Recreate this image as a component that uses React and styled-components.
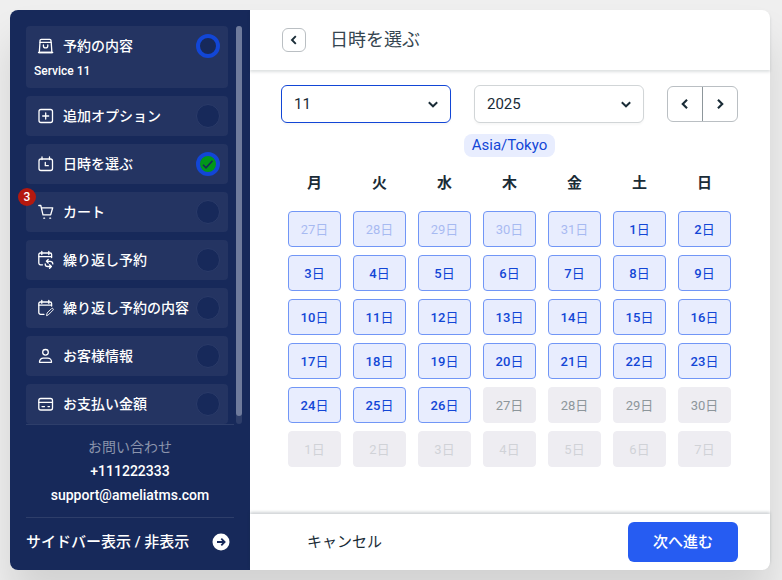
import React, { useState } from 'react';
import styled, { createGlobalStyle } from 'styled-components';

const GlobalStyle = createGlobalStyle`
  * {
    box-sizing: border-box;
  }
  body {
    margin: 0;
    background: #efefef;
    font-family: Roboto, 'Noto Sans CJK JP', sans-serif;
    color: #1a2c37;
  }
  button, select {
    font-family: inherit;
    color: inherit;
    cursor: pointer;
  }
`;

const Page = styled.div`
  min-height: 100vh;
  padding: 10px 12px 10px 10px;
  display: flex;
`;

const Card = styled.div`
  flex: 1;
  display: flex;
  border-radius: 8px;
  background: #fff;
  box-shadow: 0 30px 40px rgba(0, 0, 0, 0.12);
`;

const Sidebar = styled.aside`
  width: 240px;
  flex-shrink: 0;
  display: flex;
  flex-direction: column;
  padding: 16px 16px 0;
  border-radius: 8px 0 0 8px;
  background: #17295a;
  color: #fff;
`;

const StepArea = styled.div`
  flex: 1;
  display: flex;
  gap: 8px;
  margin-right: -8px;
`;

const StepList = styled.ul`
  flex: 1;
  min-width: 0;
  display: flex;
  flex-direction: column;
  gap: 8px;
  margin: 0;
  padding: 0;
  list-style: none;
`;

const Step = styled.li`
  position: relative;
  padding: 8px;
  border-radius: 4px;
  background: #243462;
`;

const StepHead = styled.div`
  display: flex;
  align-items: center;
  height: 24px;
  font-size: 14px;
  font-weight: 500;
  white-space: nowrap;

  svg {
    flex-shrink: 0;
    margin-right: 5px;
  }
`;

const StepLabel = styled.span`
  flex: 1;
  min-width: 0;
  line-height: 24px;
`;

const StepNote = styled.p`
  margin: 4px 0 0;
  font-size: 12px;
  font-weight: 500;
  line-height: 18px;
`;

const Marker = styled.span`
  width: 24px;
  height: 24px;
  flex-shrink: 0;
  display: flex;
  align-items: center;
  justify-content: center;
  border-radius: 50%;
  border: ${(props) => (props.$active ? '4px solid #1246d6' : '1px solid #2b3b69')};
  background: ${(props) => (props.$done ? '#019719' : '#17295a')};

  svg {
    margin: 0;
  }
`;

const Badge = styled.span`
  position: absolute;
  top: -4px;
  left: -8px;
  width: 18px;
  height: 18px;
  border-radius: 50%;
  background: #b4190f;
  font-size: 12px;
  font-weight: 500;
  line-height: 18px;
  text-align: center;
`;

const ScrollTrack = styled.div`
  width: 6px;
  padding-bottom: 8px;
  border-radius: 3px;
  background: #2e3e6a;
`;

const ScrollThumb = styled.div`
  height: 100%;
  border-radius: 3px;
  background: #6f7b9c;
`;

const Support = styled.div`
  display: flex;
  flex-direction: column;
  align-items: center;
  padding: 10px 0;
  border-top: 1px solid #2e3e6a;
  border-bottom: 1px solid #2e3e6a;
  font-size: 14px;
  font-weight: 500;
  line-height: 24px;
`;

const SupportTitle = styled.span`
  font-weight: 400;
  color: #8b94ac;
`;

const SupportLink = styled.a`
  color: #fff;
  text-decoration: none;
`;

const Collapse = styled.button`
  display: flex;
  align-items: center;
  justify-content: space-between;
  padding: 12px 4px 16px 0;
  border: none;
  background: none;
  color: #fff;
  font-size: 15px;
  font-weight: 500;
  line-height: 24px;
`;

const Main = styled.main`
  flex: 1;
  min-width: 0;
  display: flex;
  flex-direction: column;
`;

const Header = styled.header`
  display: flex;
  align-items: center;
  gap: 24px;
  height: 60px;
  padding: 0 32px;
  border-radius: 0 8px 0 0;
  box-shadow: 0 2px 3px rgba(26, 44, 55, 0.15);
`;

const BackButton = styled.button`
  width: 24px;
  height: 24px;
  display: flex;
  align-items: center;
  justify-content: center;
  padding: 0;
  border: 1px solid #babfc3;
  border-radius: 6px;
  background: #fff;
`;

const Title = styled.h1`
  margin: 0;
  font-size: 18px;
  font-weight: 400;
  line-height: 28px;
  color: #354550;
`;

const Content = styled.div`
  flex: 1;
  display: flex;
  flex-direction: column;
  padding: 15px 32px 0 31px;
`;

const Filters = styled.div`
  display: flex;
  align-items: center;
  gap: 23px;
`;

const SelectBox = styled.div`
  flex: 1;
  display: grid;
  align-items: center;

  & > * {
    grid-area: 1 / 1;
  }

  svg {
    justify-self: end;
    margin-right: 10px;
    pointer-events: none;
  }
`;

const Select = styled.select`
  width: 100%;
  height: 38px;
  padding: 0 36px 0 12px;
  appearance: none;
  border: 1px solid ${(props) => (props.$focused ? '#1246d6' : '#d1d5d7')};
  border-radius: 6px;
  background: #fff;
  box-shadow: 0 2px 2px rgba(14, 25, 32, 0.03);
  font-size: 15px;
`;

const Pager = styled.div`
  display: flex;
  height: 36px;
  border: 1px solid #babfc3;
  border-radius: 6px;
`;

const PagerButton = styled.button`
  width: 34px;
  display: flex;
  align-items: center;
  justify-content: center;
  padding: 0;
  border: none;
  background: none;

  & + & {
    width: 35px;
    border-left: 1px solid #8d969b;
  }
`;

const TimeZone = styled.span`
  align-self: center;
  margin-top: 11px;
  padding: 0 8px;
  border-radius: 8px;
  background: #e8edfe;
  color: #1246d6;
  font-size: 15px;
  line-height: 23px;
`;

const Calendar = styled.div`
  display: grid;
  grid-template-columns: repeat(7, 1fr);
  gap: 8px 12px;
  padding: 14px 7px 0;
`;

const Weekday = styled.span`
  margin-bottom: 8px;
  font-size: 15px;
  font-weight: 700;
  line-height: 24px;
  text-align: center;
`;

const Day = styled.button`
  height: 36px;
  padding: 0 0 2px;
  border: 1px solid ${(props) => (props.disabled ? '#eeedf2' : '#7196f6')};
  border-radius: 4px;
  background: ${(props) => (props.disabled ? '#eeedf2' : '#e8edfe')};
  font-size: 13px;
  font-weight: ${(props) => (props.disabled || props.$outside ? 400 : 500)};

  span {
    color: ${(props) => (props.disabled ? '#8d969b' : '#1246d6')};
    opacity: ${(props) => (props.$outside ? 0.3 : 1)};
  }

  small {
    font-size: 13px;
    font-weight: 400;
  }
`;

const Footer = styled.footer`
  display: flex;
  align-items: center;
  justify-content: space-between;
  height: 56px;
  padding: 0 32px;
  border-radius: 0 0 8px;
  box-shadow: 0 -2px 3px rgba(26, 44, 55, 0.2);
`;

const FooterButton = styled.button`
  height: 40px;
  padding: 0 25px 4px;
  border: none;
  border-radius: 6px;
  background: ${(props) => (props.$primary ? '#265cf2' : 'none')};
  color: ${(props) => (props.$primary ? '#fff' : '#1a2c37')};
  font-size: 15px;
  font-weight: ${(props) => (props.$primary ? 500 : 400)};
`;

const icons = {
  service: (
    <>
      <path d="M6 8.3V6.7a1.3 1.3 0 0 1 1.300-1.300h8.400a1.300 1.300 0 0 1 1.300 1.300v1.600" />
      <path d="M6 8.300h11.200l.7 10.200H5.300z" />
      <path d="M4.500 18.500h14.200M9.400 11v.7a2.200 2.200 0 0 0 4.400 0V11" />
    </>
  ),
  extras: (
    <>
      <rect x="5" y="5.5" width="13.500" height="13" rx="2" />
      <path d="M11.700 9v6M8.700 12h6" />
    </>
  ),
  dateTime: (
    <>
      <rect x="5" y="7" width="13.500" height="11.500" rx="2" />
      <path d="M8 5v2.500M15.500 5v2.500M11.300 10.400v3.300h3" />
    </>
  ),
  cart: (
    <>
      <path d="M4.800 5.500h2l2.200 9.300h7.700l2-7h-11" />
      <path d="M9.800 18.200h.8M15.800 18.200h.8" />
    </>
  ),
  recurring: (
    <>
      <path d="M8.500 16.800h-2A1.700 1.700 0 0 1 4.800 15V6.600A1.600 1.600 0 0 1 6.400 5H16a1.600 1.600 0 0 1 1.600 1.600V9.500" />
      <path d="M7.800 3.500v3M14.800 3.500v3M5 8.600h12.500" />
      <path d="M12.400 13.300h3.800a2.600 2.600 0 0 1 2.600 2.600M14.200 11.500l-1.800 1.800 1.800 1.700M17.400 18.500h-3.600a2.600 2.600 0 0 1-2.600-2.600M15.600 16.800l1.800 1.700-1.800 1.800" />
    </>
  ),
  summary: (
    <>
      <path d="M10 18.300H6.600A1.700 1.700 0 0 1 4.800 16.600V7.600A1.600 1.600 0 0 1 6.400 6H16a1.600 1.600 0 0 1 1.600 1.600V10" />
      <path d="M7.800 4.300v3M14.800 4.300v3M5 9.200h12.500" />
      <path d="M12.600 19.300l.5-2.300 4.400-4.400a1 1 0 0 1 1.500 1.500l-4.400 4.500z" strokeWidth="0.9" />
    </>
  ),
  customer: (
    <>
      <circle cx="11.5" cy="8.300" r="2.800" />
      <path d="M5.500 18.300v-.5a3.700 3.700 0 0 1 3.700-3.700h4.600a3.700 3.700 0 0 1 3.700 3.700v.5z" />
    </>
  ),
  payment: (
    <>
      <rect x="4.800" y="6.500" width="13.700" height="11.500" rx="2" />
      <path d="M5 10.300h13.500M8 14.600h2.500M14 14.600h1.500" />
    </>
  ),
};

function Icon({ name }) {
  return (
    <svg
      width="24"
      height="24"
      viewBox="0 0 24 24"
      fill="none"
      stroke="currentColor"
      strokeWidth="1.3"
      strokeLinecap="round"
      strokeLinejoin="round"
      aria-hidden="true"
    >
      {icons[name]}
    </svg>
  );
}

const chevrons = {
  left: 'M9.800 4.200L6 8l3.800 3.800',
  right: 'M6.200 4.200L10 8l-3.800 3.800',
  down: 'M3.800 6.200L8 10.300l4.200-4.100',
};

function Chevron({ direction, size = 16 }) {
  return (
    <svg
      width={size}
      height={size}
      viewBox="0 0 16 16"
      fill="none"
      stroke="#1a2c37"
      strokeWidth="1.9"
      aria-hidden="true"
    >
      <path d={chevrons[direction]} />
    </svg>
  );
}

const steps = [
  { icon: 'service', label: '予約の内容', note: 'Service 11', active: true },
  { icon: 'extras', label: '追加オプション' },
  { icon: 'dateTime', label: '日時を選ぶ', active: true, done: true },
  { icon: 'cart', label: 'カート', badge: 3 },
  { icon: 'recurring', label: '繰り返し予約' },
  { icon: 'summary', label: '繰り返し予約の内容' },
  { icon: 'customer', label: 'お客様情報' },
  { icon: 'payment', label: 'お支払い金額' },
];

const weekdays = ['月', '火', '水', '木', '金', '土', '日'];
const months = Array.from({ length: 12 }, (_, i) => i + 1);
const years = [2025, 2026, 2027];

// November 2025, padded with the neighbouring months to full weeks
const days = Array.from({ length: 42 }, (_, i) => {
  const date = new Date(2025, 9, 27 + i);
  return {
    key: i,
    number: date.getDate(),
    outside: date.getMonth() !== 10,
    disabled: i > 30,
  };
});

function App() {
  const [month, setMonth] = useState(11);
  const [year, setYear] = useState(2025);

  return (
    <Page>
      <GlobalStyle />
      <Card>
        <Sidebar>
          <StepArea>
            <StepList>
              {steps.map((step) => (
                <Step key={step.label}>
                  <StepHead>
                    <Icon name={step.icon} />
                    <StepLabel>{step.label}</StepLabel>
                    <Marker $active={step.active} $done={step.done}>
                      {step.done && (
                        <svg width="16" height="16" viewBox="0 0 16 16" fill="none" stroke="#17295a" strokeWidth="1.6">
                          <path d="M3 8.800l3 3 6.500-7" />
                        </svg>
                      )}
                    </Marker>
                  </StepHead>
                  {step.note && <StepNote>{step.note}</StepNote>}
                  {step.badge && <Badge>{step.badge}</Badge>}
                </Step>
              ))}
            </StepList>
            <ScrollTrack>
              <ScrollThumb />
            </ScrollTrack>
          </StepArea>
          <Support>
            <SupportTitle>お問い合わせ</SupportTitle>
            <SupportLink href="tel:+111222333">+111222333</SupportLink>
            <SupportLink href="mailto:support@ameliatms.com">support@ameliatms.com</SupportLink>
          </Support>
          <Collapse type="button">
            サイドバー表示 / 非表示
            <svg width="18" height="18" viewBox="0 0 18 18" aria-hidden="true">
              <circle cx="9" cy="9" r="8.5" fill="#fff" />
              <path d="M5 9h7.500M9.300 5.700L12.600 9l-3.300 3.300" fill="none" stroke="#17295a" strokeWidth="1.8" />
            </svg>
          </Collapse>
        </Sidebar>
        <Main>
          <Header>
            <BackButton type="button" aria-label="戻る">
              <Chevron direction="left" />
            </BackButton>
            <Title>日時を選ぶ</Title>
          </Header>
          <Content>
            <Filters>
              <SelectBox>
                <Select
                  $focused
                  aria-label="月"
                  value={month}
                  onChange={(e) => setMonth(Number(e.target.value))}
                >
                  {months.map((m) => (
                    <option key={m} value={m}>{m}</option>
                  ))}
                </Select>
                <Chevron direction="down" />
              </SelectBox>
              <SelectBox>
                <Select
                  aria-label="年"
                  value={year}
                  onChange={(e) => setYear(Number(e.target.value))}
                >
                  {years.map((y) => (
                    <option key={y} value={y}>{y}</option>
                  ))}
                </Select>
                <Chevron direction="down" />
              </SelectBox>
              <Pager>
                <PagerButton type="button" aria-label="前の月">
                  <Chevron direction="left" size={18} />
                </PagerButton>
                <PagerButton type="button" aria-label="次の月">
                  <Chevron direction="right" size={18} />
                </PagerButton>
              </Pager>
            </Filters>
            <TimeZone>Asia/Tokyo</TimeZone>
            <Calendar>
              {weekdays.map((name) => (
                <Weekday key={name}>{name}</Weekday>
              ))}
              {days.map((day) => (
                <Day key={day.key} type="button" disabled={day.disabled} $outside={day.outside}>
                  <span>
                    {day.number}
                    <small>日</small>
                  </span>
                </Day>
              ))}
            </Calendar>
          </Content>
          <Footer>
            <FooterButton type="button">キャンセル</FooterButton>
            <FooterButton type="button" $primary>次へ進む</FooterButton>
          </Footer>
        </Main>
      </Card>
    </Page>
  );
}

export default App;
